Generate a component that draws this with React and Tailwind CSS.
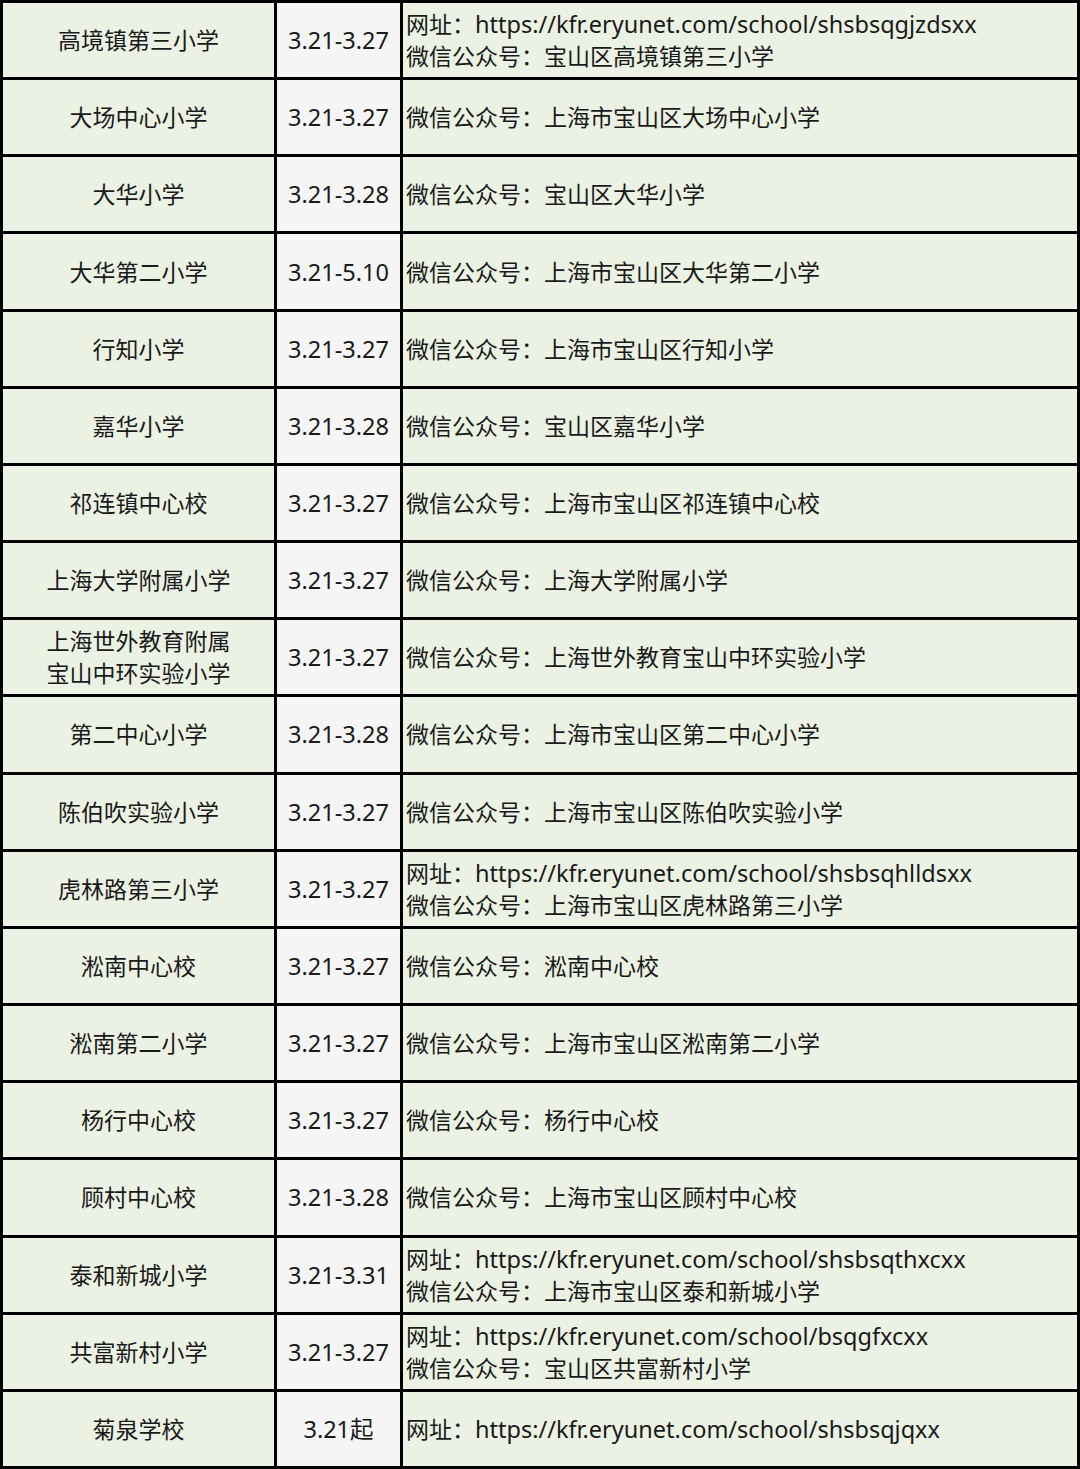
const rows = [
	{ name: ["高境镇第三小学"], date: "3.21-3.27", info: ["网址：https://kfr.eryunet.com/school/shsbsqgjzdsxx", "微信公众号：宝山区高境镇第三小学"] },
	{ name: ["大场中心小学"], date: "3.21-3.27", info: ["微信公众号：上海市宝山区大场中心小学"] },
	{ name: ["大华小学"], date: "3.21-3.28", info: ["微信公众号：宝山区大华小学"] },
	{ name: ["大华第二小学"], date: "3.21-5.10", info: ["微信公众号：上海市宝山区大华第二小学"] },
	{ name: ["行知小学"], date: "3.21-3.27", info: ["微信公众号：上海市宝山区行知小学"] },
	{ name: ["嘉华小学"], date: "3.21-3.28", info: ["微信公众号：宝山区嘉华小学"] },
	{ name: ["祁连镇中心校"], date: "3.21-3.27", info: ["微信公众号：上海市宝山区祁连镇中心校"] },
	{ name: ["上海大学附属小学"], date: "3.21-3.27", info: ["微信公众号：上海大学附属小学"] },
	{ name: ["上海世外教育附属", "宝山中环实验小学"], date: "3.21-3.27", info: ["微信公众号：上海世外教育宝山中环实验小学"] },
	{ name: ["第二中心小学"], date: "3.21-3.28", info: ["微信公众号：上海市宝山区第二中心小学"] },
	{ name: ["陈伯吹实验小学"], date: "3.21-3.27", info: ["微信公众号：上海市宝山区陈伯吹实验小学"] },
	{ name: ["虎林路第三小学"], date: "3.21-3.27", info: ["网址：https://kfr.eryunet.com/school/shsbsqhlldsxx", "微信公众号：上海市宝山区虎林路第三小学"] },
	{ name: ["淞南中心校"], date: "3.21-3.27", info: ["微信公众号：淞南中心校"] },
	{ name: ["淞南第二小学"], date: "3.21-3.27", info: ["微信公众号：上海市宝山区淞南第二小学"] },
	{ name: ["杨行中心校"], date: "3.21-3.27", info: ["微信公众号：杨行中心校"] },
	{ name: ["顾村中心校"], date: "3.21-3.28", info: ["微信公众号：上海市宝山区顾村中心校"] },
	{ name: ["泰和新城小学"], date: "3.21-3.31", info: ["网址：https://kfr.eryunet.com/school/shsbsqthxcxx", "微信公众号：上海市宝山区泰和新城小学"] },
	{ name: ["共富新村小学"], date: "3.21-3.27", info: ["网址：https://kfr.eryunet.com/school/bsqgfxcxx", "微信公众号：宝山区共富新村小学"] },
	{ name: ["菊泉学校"], date: "3.21起", info: ["网址：https://kfr.eryunet.com/school/shsbsqjqxx"] },
];

function InfoLine({ text }) {
	// latin url part renders a touch wider in the original
	if (text.startsWith("网址：")) {
		return (
			<span>
				网址：<span className="text-[23.5px]">{text.slice(3)}</span>
			</span>
		);
	}
	return <span>{text}</span>;
}

export default function App() {
	return (
		<div
			className="w-[1080px] h-[1469px] bg-black p-[3px] grid grid-cols-[271px_123px_1fr] grid-rows-[repeat(19,1fr)] gap-[3px] text-[23px] leading-[32px] text-[#1a1a1a]"
			style={{ fontFamily: '"Noto Sans", "Noto Sans CJK SC", sans-serif' }}
		>
			{rows.map((r, i) => [
				<div key={`n${i}`} className="bg-[#ebf1e3] flex flex-col items-center justify-center text-center">
					{r.name.map((t, j) => (
						<span key={j}>{t}</span>
					))}
				</div>,
				<div key={`d${i}`} className="bg-[#f5f5f5] flex items-center justify-center text-[23.5px]">
					{r.date}
				</div>,
				<div key={`i${i}`} className="bg-[#ebf1e3] flex flex-col justify-center pl-[3px] whitespace-nowrap">
					{r.info.map((t, j) => (
						<InfoLine key={j} text={t} />
					))}
				</div>,
			])}
		</div>
	);
}
